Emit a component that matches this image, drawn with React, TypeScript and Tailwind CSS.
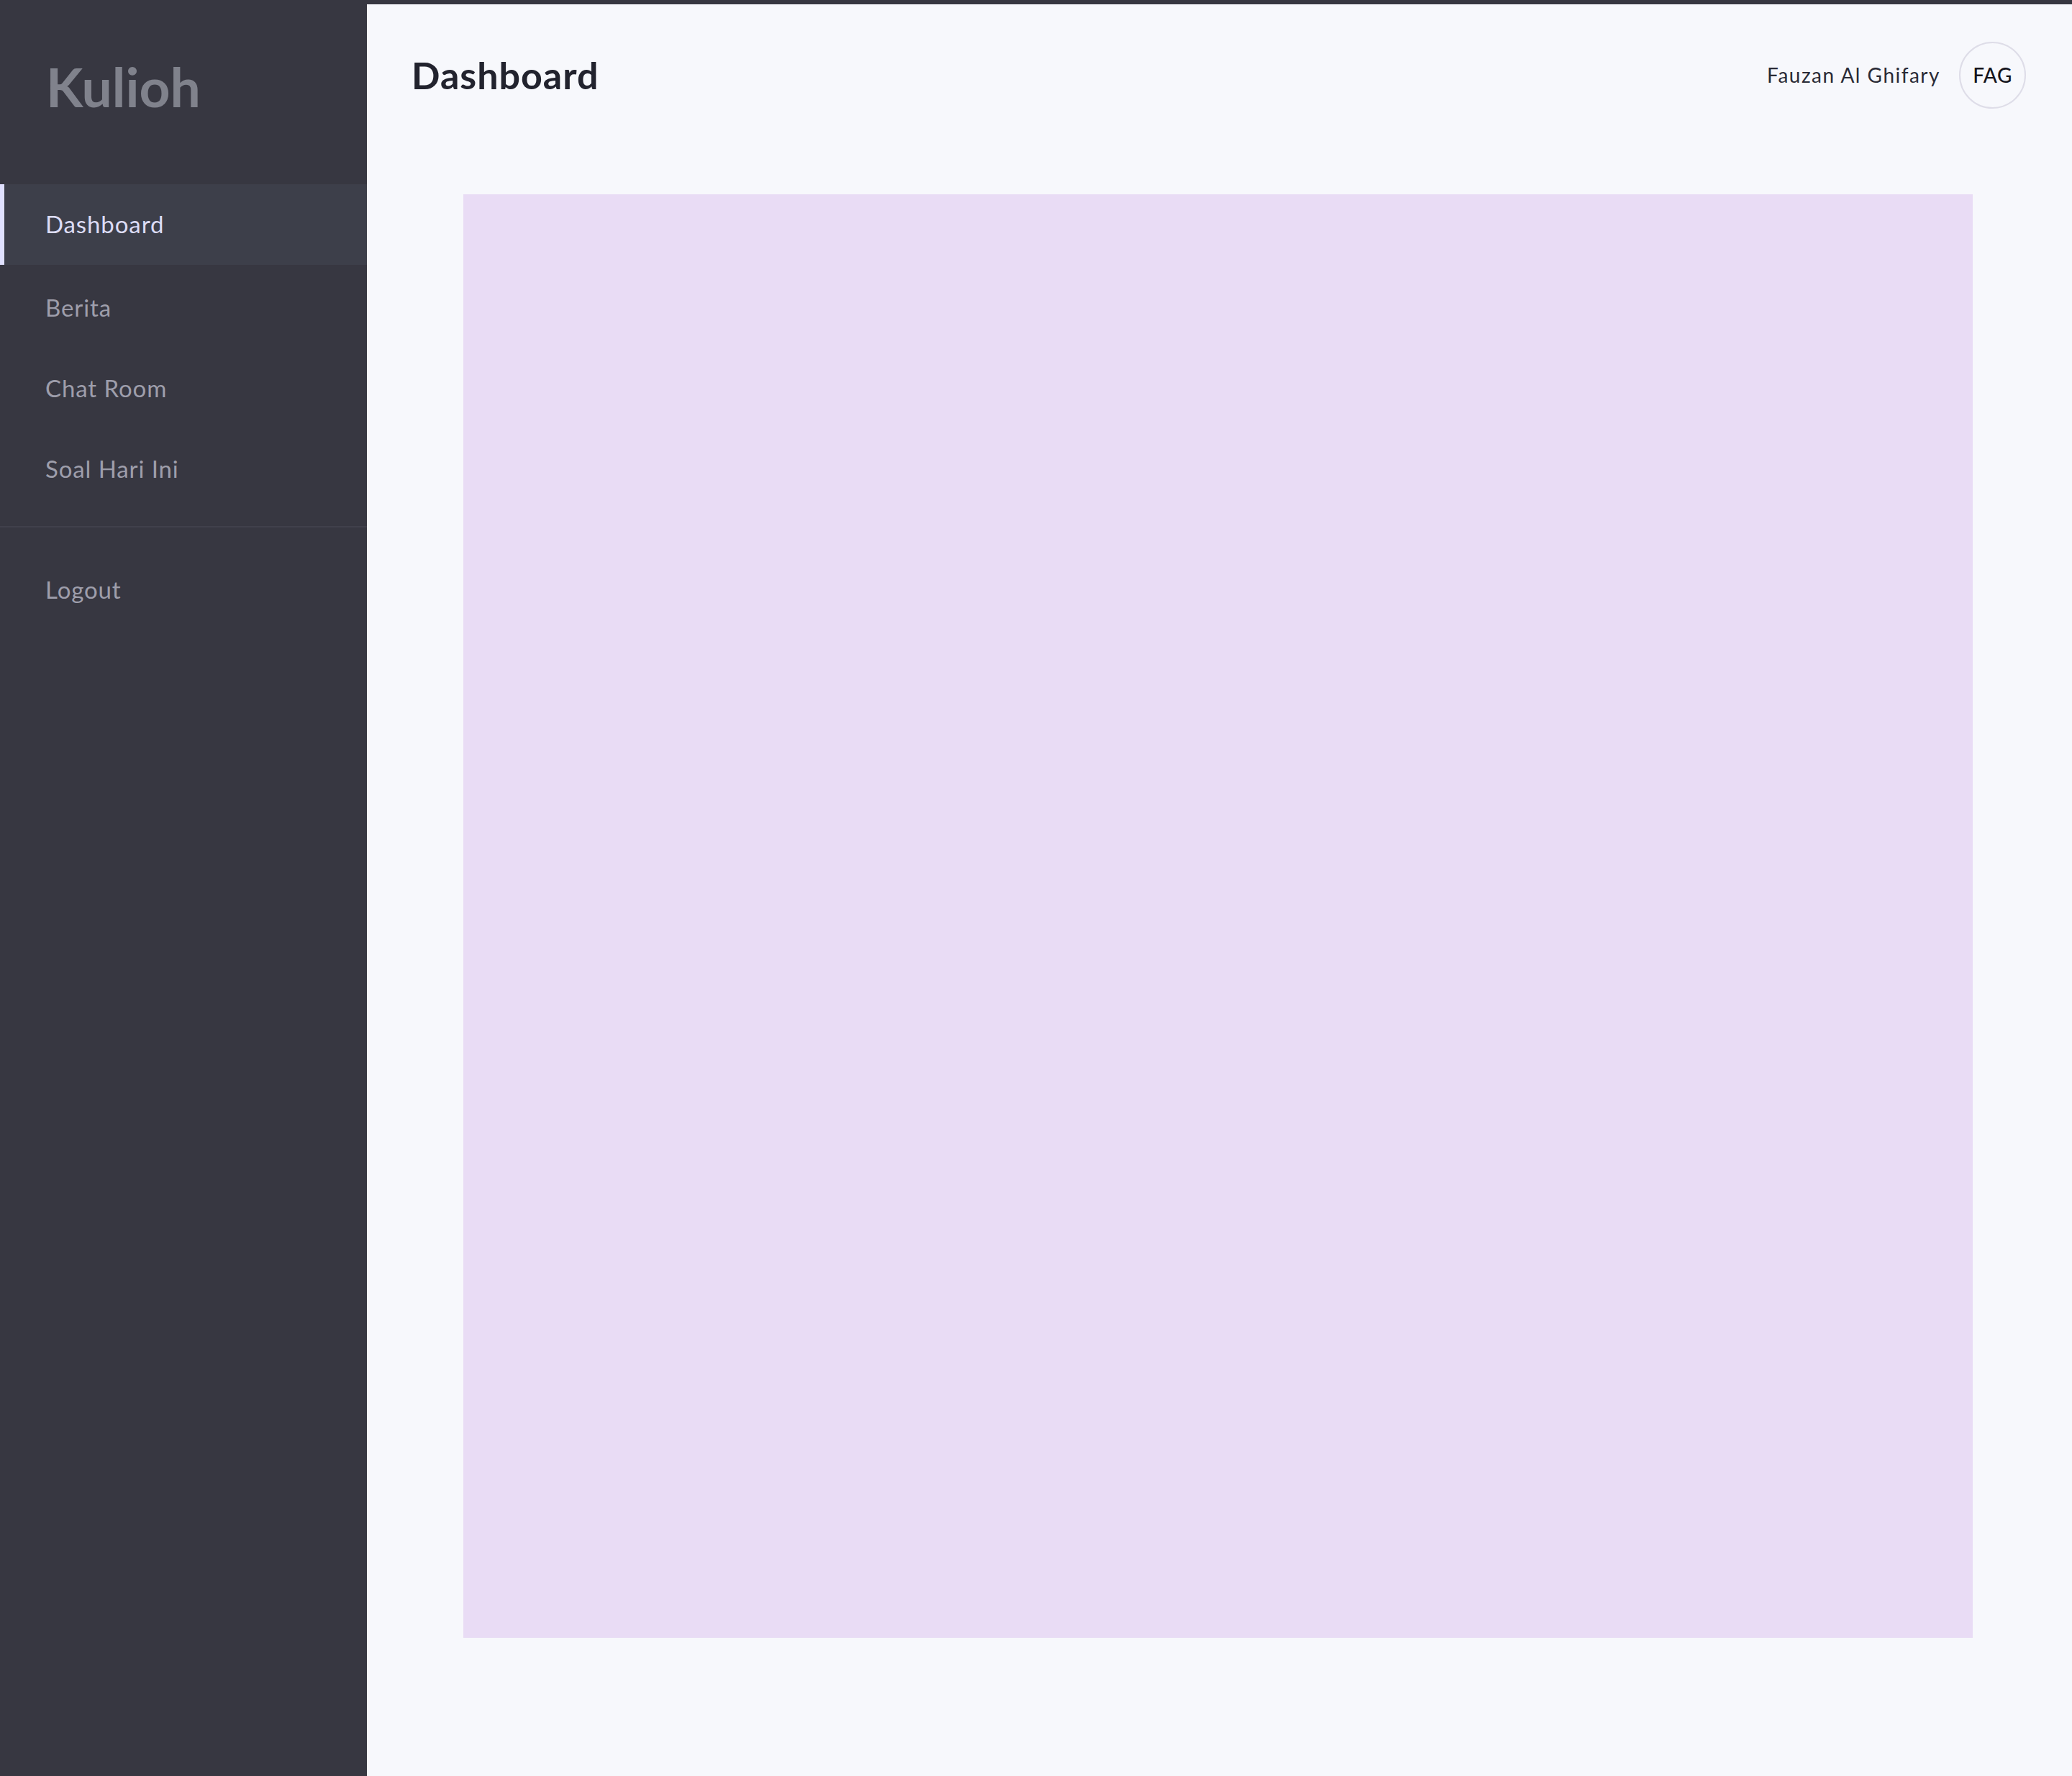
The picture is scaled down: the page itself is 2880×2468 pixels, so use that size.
const navItems = ["Dashboard", "Berita", "Chat Room", "Soal Hari Ini"];

function Sidebar() {
  return (
    <aside className="w-[510px] shrink-0 bg-[#373741] flex flex-col">
      <div className="h-[256px] pl-[64px] pt-[83px]">
        <span className="text-[75px] leading-none font-bold text-[#80828c]">Kulioh</span>
      </div>

      <nav className="flex flex-col">
        {navItems.map((item, i) => (
          <a
            key={item}
            className={
              i === 0
                ? "h-[112px] mb-[4px] flex items-center pl-[57px] border-l-[6px] border-[#e0e0ff] bg-[#3d3f4a] text-[33px] tracking-[0.9px] text-[#dcdcf5]"
                : "h-[112px] flex items-center pl-[63px] text-[33px] tracking-[0.9px] text-[#9e9eab]"
            }
          >
            {item}
          </a>
        ))}
      </nav>

      <div className="mt-[23px] border-t-2 border-[#40404b]" />

      <a className="mt-[31px] h-[112px] flex items-center pl-[63px] text-[33px] tracking-[0.9px] text-[#9e9eab]">Logout</a>
    </aside>
  );
}

export default function App() {
  return (
    <div className="min-h-screen flex font-['Lato',sans-serif]">
      <Sidebar />

      <main className="flex-1 bg-[#f7f8fc] border-t-[6px] border-[#373741]">
        <header className="h-[196px] px-[62px] pr-[64px] flex items-center justify-between">
          <h1 className="text-[52px] font-bold tracking-[1px] text-[#22232e]">Dashboard</h1>
          <div className="flex items-center gap-[26px]">
            <span className="text-[28px] tracking-[1.5px] text-[#2a2b36]">Fauzan Al Ghifary</span>
            <div className="w-[93px] h-[93px] rounded-full border-2 border-[#dedde8] flex items-center justify-center text-[28px] font-medium tracking-[0.5px] text-[#15151c]">
              FAG
            </div>
          </div>
        </header>

        <section className="mt-[68px] pl-[134px] pr-[138px] pb-[192px]">
          <div className="h-[2006px] bg-[#e9dcf5]" />
        </section>
      </main>
    </div>
  );
}
